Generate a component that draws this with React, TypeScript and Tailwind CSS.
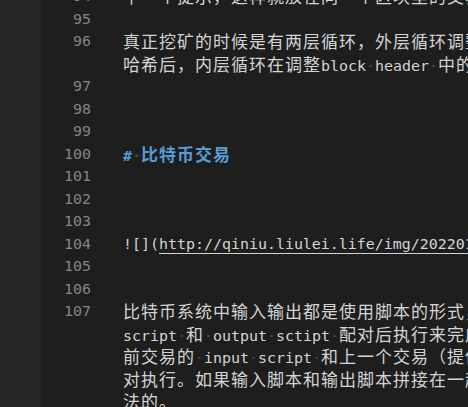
import React from "react";

type Line = { n?: number; rows: string[]; kind?: "text" | "heading" | "link" };

const lines: Line[] = [
  { n: 94, rows: ["中一个提示，这样就放在同一个区块里的交易中已经包含了"] },
  { n: 95, rows: [""] },
  { n: 96, rows: ["真正挖矿的时候是有两层循环，外层循环调整coinbase", "哈希后，内层循环在调整block header 中的nonce"] },
  { n: 97, rows: [""] },
  { n: 98, rows: [""] },
  { n: 99, rows: [""] },
  { n: 100, rows: ["# 比特币交易"], kind: "heading" },
  { n: 101, rows: [""] },
  { n: 102, rows: [""] },
  { n: 103, rows: [""] },
  { n: 104, rows: ["![](http://qiniu.liulei.life/img/20220101.png)"], kind: "link" },
  { n: 105, rows: [""] },
  { n: 106, rows: [""] },
  {
    n: 107,
    rows: [
      "比特币系统中输入输出都是使用脚本的形式，当前",
      "script 和 output sctipt 配对后执行来完成验证",
      "前交易的 input script 和上一个交易（提供币",
      "对执行。如果输入脚本和输出脚本拼接在一起执行",
      "法的。",
    ],
  },
];

// split a row into runs of wide (CJK) chars, spaces and narrow chars
function Txt({ s }: { s: string }) {
  const runs = s.match(/[\u2e80-\uffff]+|\s+|[^\s\u2e80-\uffff]+/g) ?? [];
  return (
    <>
      {runs.map((r, i) => {
        if (/^[\u2e80-\uffff]/.test(r))
          return (
            <span key={i} className="text-[17px] tracking-[1px] font-['Noto_Sans_CJK_SC',sans-serif]">
              {r}
            </span>
          );
        if (/^\s/.test(r))
          return (
            <span key={i} className="text-[#4a4a4a]">
              {"·".repeat(r.length)}
            </span>
          );
        return <span key={i}>{r}</span>;
      })}
    </>
  );
}

function Row({ line, text, first }: { line: Line; text: string; first: boolean }) {
  if (line.kind === "heading") {
    return (
      <div className="text-[#569cd6] font-bold">
        <Txt s={text} />
      </div>
    );
  }
  if (line.kind === "link") {
    const m = text.indexOf("http");
    return (
      <div>
        <span>{text.slice(0, m)}</span>
        <span className="underline underline-offset-[4px]">{text.slice(m)}</span>
      </div>
    );
  }
  return (
    <div className={first ? "" : ""}>
      <Txt s={text} />
    </div>
  );
}

export default function App() {
  return (
    <div className="w-[468px] h-[407px] overflow-hidden bg-[#1e1e1e] flex font-['DejaVu_Sans_Mono',monospace] text-[14.95px] text-[#d4d4d4]">
      <div className="w-[41px] shrink-0 bg-[#252526]" />
      <div className="flex-1 mt-[-15px] overflow-hidden">
        {lines.map((line) => (
          <div key={line.n} className="flex">
            <div className="w-[50px] shrink-0 text-right text-[#858585] h-[22.5px] leading-[22.5px]">
              {line.n}
            </div>
            <div className="pl-[32px] whitespace-nowrap leading-[22.5px]">
              {line.rows.map((t, i) => (
                <div key={i} className="h-[22.5px]">
                  <Row line={line} text={t} first={i === 0} />
                </div>
              ))}
            </div>
          </div>
        ))}
      </div>
    </div>
  );
}
